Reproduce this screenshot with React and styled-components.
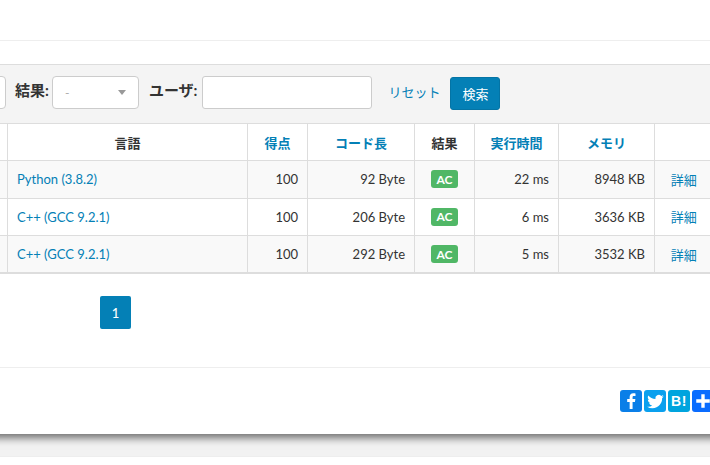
import React from "react";
import styled, { createGlobalStyle } from "styled-components";

const GlobalStyle = createGlobalStyle`
html, body {
  margin: 0;
  padding: 0;
  background: #fff;
  overflow: hidden;
}
body {
  font-family: Lato, "Noto Sans CJK JP", sans-serif;
  font-size: 13px;
  color: #333;
}
a { color: #0480b6; text-decoration: none; }
`;

const Page = styled.div`
width: 710px;
height: 465px;
overflow: hidden;
background: #fff;
display: flex;
flex-direction: column;
`;
const Sheet = styled.div`
height: 434px;
flex: none;
margin: 0 -20px;
padding: 0 20px;
background: #fff;
box-shadow: 0 4px 8px rgba(0, 0, 0, 0.55);
position: relative;
z-index: 1;
display: flex;
flex-direction: column;
`;
const TopSpace = styled.div`
height: 40px;
flex: none;
border-bottom: 1px solid #eee;
margin-bottom: 23px;
`;
const FilterBar = styled.div`
height: 47px;
flex: none;
padding-top: 11px;
background: #f4f4f4;
border-top: 1px solid #ddd;
display: flex;
align-items: flex-start;
`;
const PartialSelect = styled.div`
width: 16px;
height: 33px;
flex: none;
margin-left: -10px;
margin-right: 9px;
box-sizing: border-box;
background: #fff;
border: 1px solid #ccc;
border-radius: 4px;
`;
const Label = styled.label`
font-size: 15px;
line-height: 28px;
font-weight: 700;
color: #333;
margin-right: 3px;
white-space: nowrap;
`;
const SelectBox = styled.div`
width: 87px;
height: 33px;
flex: none;
box-sizing: border-box;
background: #fff;
border: 1px solid #ccc;
border-radius: 4px;
margin-right: 10px;
padding: 0 12px;
display: flex;
align-items: center;
justify-content: space-between;
color: #aaa;
font-size: 12px;
`;
const Caret = styled.span`
width: 0;
height: 0;
border-left: 4.5px solid transparent;
border-right: 4.5px solid transparent;
border-top: 5px solid #999;
`;
const TextInput = styled.input`
width: 170px;
height: 33px;
flex: none;
box-sizing: border-box;
background: #fff;
border: 1px solid #ccc;
border-radius: 3px;
margin: 0 16px 0 2px;
padding: 0 8px;
`;
const ResetLink = styled.a`
font-size: 13px;
line-height: 33px;
margin-right: 10px;
white-space: nowrap;
`;
const SearchButton = styled.button`
width: 50px;
height: 33px;
flex: none;
margin-top: 1px;
background: #0480b6;
border: 1px solid #0474a5;
border-radius: 3px;
color: #fff;
font-family: inherit;
font-size: 13px;
padding: 0;
`;
const Table = styled.table`
width: 719px;
flex: none;
margin-left: -9px;
border-collapse: collapse;
table-layout: fixed;
border-bottom: 2px solid #ddd;
`;
const HeadCell = styled.th`
height: 37px;
padding: 0;
box-sizing: border-box;
border: 1px solid #ddd;
border-right: ${(p) => (p.$last ? "none" : "1px solid #ddd")};
background: #fff;
text-align: center;
font-size: 13px;
font-weight: 700;
color: ${(p) => (p.$link ? "#0480b6" : "#333")};
`;
const Row = styled.tr`
height: 37.5px;
background: ${(p) => (p.$odd ? "#f9f9f9" : "#fff")};
`;
const Cell = styled.td`
padding: 0 9px 0 ${(p) => (p.$last ? "11px" : "9px")};
box-sizing: border-box;
border: 1px solid #ddd;
border-right: ${(p) => (p.$last ? "none" : "1px solid #ddd")};
font-size: 13px;
color: #333;
text-align: ${(p) => p.$align || "left"};
white-space: nowrap;
`;
const Badge = styled.span`
display: flex;
align-items: center;
justify-content: center;
width: 27px;
height: 18px;
margin: 0 auto;
background: #50b766;
border-radius: 3px;
color: #fff;
font-size: 12px;
font-weight: 700;
`;
const Pager = styled.div`
height: 94px;
flex: none;
box-sizing: border-box;
padding: 22px 0 0 100px;
border-bottom: 1px solid #eee;
`;
const PageButton = styled.span`
display: flex;
align-items: center;
justify-content: center;
width: 31px;
height: 33px;
background: #0480b6;
border-radius: 2px;
color: #fff;
font-size: 13px;
font-weight: 500;
`;
const ShareRow = styled.div`
flex: 1;
display: flex;
justify-content: flex-end;
gap: 2px;
padding-top: 22px;
margin-right: -4px;
`;
const ShareIcon = styled.span`
width: 22px;
height: 22px;
flex: none;
border-radius: 3px;
background: ${(p) => p.$color};
color: #fff;
display: flex;
align-items: center;
justify-content: center;
`;
const HatenaText = styled.span`
font-family: "Liberation Sans", sans-serif;
font-size: 14px;
font-weight: 700;
letter-spacing: 0.5px;
`;
const BottomLine = styled.div`
height: 22px;
flex: none;
border-bottom: 1px solid #eee;
background: #f2f2f2;
`;

const columns = [
  { width: 16 },
  { width: 240, label: "言語" },
  { width: 60, label: "得点", link: true },
  { width: 107, label: "コード長", link: true },
  { width: 60, label: "結果" },
  { width: 84, label: "実行時間", link: true },
  { width: 96, label: "メモリ", link: true },
  { width: 56 },
];

const rows = [
  { lang: "Python (3.8.2)", score: 100, size: "92 Byte", time: "22 ms", mem: "8948 KB" },
  { lang: "C++ (GCC 9.2.1)", score: 100, size: "206 Byte", time: "6 ms", mem: "3636 KB" },
  { lang: "C++ (GCC 9.2.1)", score: 100, size: "292 Byte", time: "5 ms", mem: "3532 KB" },
];

export default function App() {
  return (
    <Page>
      <GlobalStyle />
      <Sheet>
        <TopSpace />
        <FilterBar>
          <PartialSelect />
          <Label>結果:</Label>
          <SelectBox>
            -
            <Caret />
          </SelectBox>
          <Label>ユーザ:</Label>
          <TextInput />
          <ResetLink href="#">リセット</ResetLink>
          <SearchButton>検索</SearchButton>
        </FilterBar>
        <Table>
          <colgroup>
            {columns.map((c, i) => (
              <col key={i} width={c.width} />
            ))}
          </colgroup>
          <thead>
            <tr>
              {columns.map((c, i) => (
                <HeadCell key={i} $link={c.link} $last={i === columns.length - 1}>
                  {c.label}
                </HeadCell>
              ))}
            </tr>
          </thead>
          <tbody>
            {rows.map((r, i) => (
              <Row key={i} $odd={i % 2 === 0}>
                <Cell />
                <Cell>
                  <a href="#">{r.lang}</a>
                </Cell>
                <Cell $align="right">{r.score}</Cell>
                <Cell $align="right">{r.size}</Cell>
                <Cell $align="center">
                  <Badge>AC</Badge>
                </Cell>
                <Cell $align="right">{r.time}</Cell>
                <Cell $align="right">{r.mem}</Cell>
                <Cell $align="center" $last>
                  <a href="#">詳細</a>
                </Cell>
              </Row>
            ))}
          </tbody>
        </Table>
        <Pager>
          <PageButton>1</PageButton>
        </Pager>
        <ShareRow>
          <ShareIcon $color="#0a7fe8">
            <svg width="18" height="18" viewBox="0 0 16 16" fill="#fff">
              <path d="M9.4 15V8.8h2.1l.4-2.5H9.4V4.8c0-.8.3-1.2 1.2-1.2H12V1.3C11.6 1.2 10.9 1.1 10 1.1 8 1.1 6.8 2.3 6.8 4.5v1.8H4.6v2.5h2.2V15z" />
            </svg>
          </ShareIcon>
          <ShareIcon $color="#0aa0ee">
            <svg width="19" height="19" viewBox="0 0 24 24" fill="#fff">
              <path d="M22.5 5.6c-.8.3-1.6.6-2.5.7.9-.5 1.6-1.4 1.9-2.4-.8.5-1.8.9-2.7 1a4.3 4.3 0 0 0-7.3 3.9A12.2 12.2 0 0 1 3 4.4a4.3 4.3 0 0 0 1.3 5.700c-.7 0-1.400-.2-1.900-.5v.1c0 2.100 1.500 3.800 3.400 4.200-.6.2-1.300.2-1.900.1.500 1.700 2.100 2.900 4 3A8.600 8.600 0 0 1 1.500 18.500 12.100 12.100 0 0 0 8.100 20.400c7.900 0 12.300-6.600 12.300-12.300v-.6c.8-.6 1.500-1.300 2.100-1.900z" />
            </svg>
          </ShareIcon>
          <ShareIcon $color="#00a4de">
            <HatenaText>B!</HatenaText>
          </ShareIcon>
          <ShareIcon $color="#0a6cff">
            <svg width="18" height="18" viewBox="0 0 16 16" fill="#fff">
              <path d="M6.500 2h3v4.500H14v3H9.500V14h-3V9.500H2v-3h4.500z" />
            </svg>
          </ShareIcon>
        </ShareRow>
      </Sheet>
      <BottomLine />
    </Page>
  );
}
